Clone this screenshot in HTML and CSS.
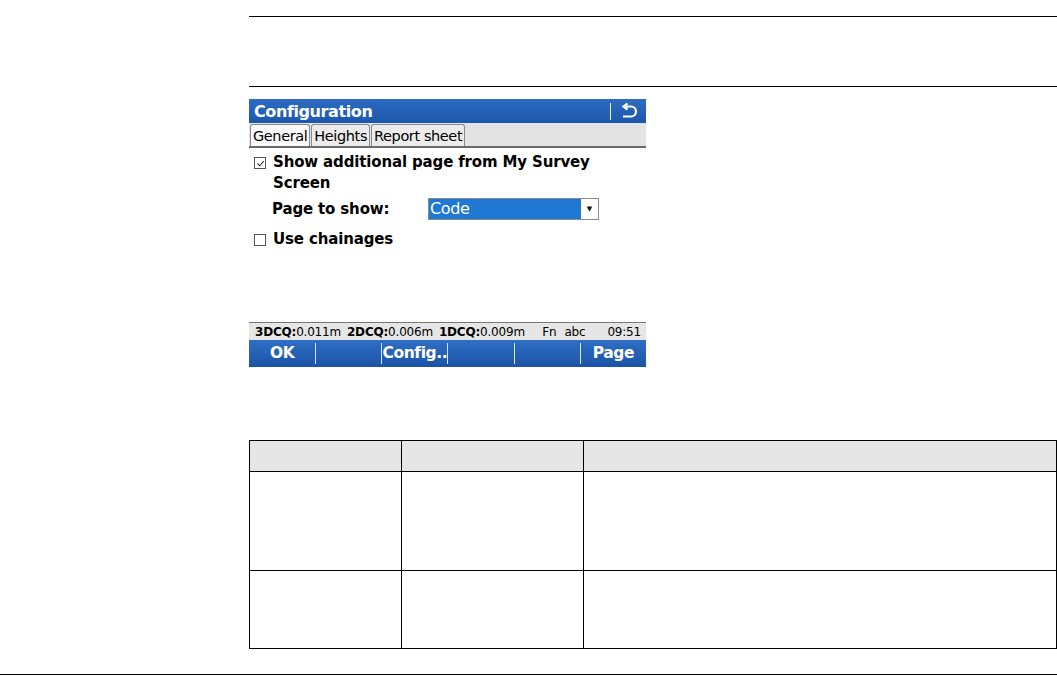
FILE: index.html
```html
<!DOCTYPE html>
<html>
<head>
    <title>Configuration</title>
    <link rel="stylesheet" href="styles.css">
</head>
<body>
    <div class="page">
        <div class="rule rule-top"></div>
        <div class="rule rule-mid"></div>

        <div class="screen">
            <div class="titlebar">
                <span class="title">Configuration</span>
                <span class="titlebar-tools">
                    <span class="tool-sep"></span>
                    <svg class="back-icon" width="18" height="16" viewBox="0 0 18 16">
                        <path d="M4 3.5 H11 A5 5 0 0 1 11 13.5 H3" fill="none" stroke="#fff" stroke-width="2.2"/>
                        <path d="M7.5 0.5 L3.5 3.5 L7.5 6.5" fill="none" stroke="#fff" stroke-width="2.2"/>
                    </svg>
                </span>
            </div>
            <div class="tabs">
                <span class="tab tab-active">General</span>
                <span class="tab">Heights</span>
                <span class="tab">Report sheet</span>
            </div>

            <div class="screen-body">
                <div class="check-row">
                    <span class="box">
                        <svg width="9" height="9" viewBox="0 0 9 9">
                            <path d="M1.5 4.5 L3.8 6.8 L7.8 2.2" fill="none" stroke="#333" stroke-width="1.1"/>
                        </svg>
                    </span>
                    <span class="check-label">Show additional page from My Survey<br>Screen</span>
                </div>
                <div class="field-row">
                    <span class="field-label">Page to show:</span>
                    <div class="select">
                        <span class="select-value">Code</span>
                        <span class="select-arrow">&#9660;</span>
                    </div>
                </div>
                <div class="check-row check-row-last">
                    <span class="box"></span>
                    <span class="check-label">Use chainages</span>
                </div>
            </div>

            <div class="statusbar">
                <span class="q"><b>3DCQ:</b>0.011m</span>
                <span class="q"><b>2DCQ:</b>0.006m</span>
                <span class="q"><b>1DCQ:</b>0.009m</span>
                <span class="status-spacer"></span>
                <span class="fn">Fn</span>
                <span class="abc">abc</span>
                <span class="clock">09:51</span>
            </div>
            <div class="softkeys">
                <span class="key">OK</span>
                <span class="key"></span>
                <span class="key">Config..</span>
                <span class="key"></span>
                <span class="key"></span>
                <span class="key">Page</span>
            </div>
        </div>

        <table class="info">
            <tr class="head-row"><th></th><th></th><th></th></tr>
            <tr class="row-one"><td></td><td></td><td></td></tr>
            <tr class="row-two"><td></td><td></td><td></td></tr>
        </table>
    </div>
    <div class="rule rule-bottom"></div>
</body>
</html>
```

FILE: styles.css
```css
body {
    margin: 0;
    background: #fff;
    font-family: "DejaVu Sans", Verdana, sans-serif;
    color: #000;
}
.page {
    padding-left: 249px;
}
.rule {
    border-top: 1px solid #000;
}
.rule-top {
    margin-top: 16px;
}
.rule-mid {
    margin-top: 69px;
}
.rule-bottom {
    margin-top: 25px;
}

/* device screen */
.screen {
    width: 397px;
    margin-top: 12px;
    background: #fff;
}
.titlebar {
    height: 24px;
    background: linear-gradient(#2c6cc2, #1d57aa);
    display: flex;
    align-items: center;
    justify-content: space-between;
    padding: 0 8px 0 5px;
}
.title {
    color: #fff;
    font-weight: bold;
    font-size: 16px;
    letter-spacing: -0.4px;
}
.titlebar-tools {
    display: flex;
    align-items: center;
    gap: 9px;
}
.tool-sep {
    width: 1px;
    height: 17px;
    background: #e8eef8;
}
.tabs {
    height: 23px;
    background: #e3e3e3;
    border-bottom: 2px solid #6a6a6a;
    display: flex;
    align-items: flex-end;
    padding-left: 1px;
}
.tab {
    height: 21px;
    line-height: 22px;
    padding: 0 2px;
    font-size: 14.5px;
    letter-spacing: -0.4px;
    border: 1px solid #8a8a8a;
    border-bottom: none;
    border-radius: 3px 3px 0 0;
    background: #ececec;
    margin-right: 1px;
}
.tab-active {
    background: #fafafa;
}
.screen-body {
    height: 174px;
    padding-top: 4px;
    box-sizing: border-box;
}
.check-row {
    display: flex;
    align-items: flex-start;
    padding-left: 5px;
}
.check-row-last {
    margin-top: 9px;
}
.box {
    width: 10px;
    height: 10px;
    border: 1px solid #555;
    margin-top: 5px;
    margin-right: 7px;
    display: flex;
    align-items: center;
    justify-content: center;
    background: #fff;
}
.check-label,
.field-label {
    font-weight: bold;
    font-size: 15px;
    line-height: 21px;
    letter-spacing: -0.15px;
}
.field-row {
    display: flex;
    align-items: center;
    padding-left: 23px;
    margin-top: 4px;
}
.field-label {
    width: 156px;
}
.select {
    width: 171px;
    height: 22px;
    border: 1px solid #8a8a8a;
    display: flex;
    box-sizing: border-box;
}
.select-value {
    flex: 1;
    background: #1f78d4;
    color: #fff;
    font-size: 16px;
    line-height: 20px;
    padding-left: 1px;
    letter-spacing: -0.4px;
}
.select-arrow {
    width: 17px;
    font-size: 7px;
    line-height: 20px;
    text-align: center;
    color: #111;
}

/* bottom bars */
.statusbar {
    height: 17px;
    border-top: 1px solid #777;
    background: #e6e6e6;
    display: flex;
    align-items: center;
    font-size: 12px;
    padding: 0 5px 0 6px;
    letter-spacing: -0.2px;
}
.q {
    margin-right: 6px;
}
.status-spacer {
    flex: 1;
}
.fn {
    margin-right: 8px;
}
.abc {
    margin-right: 22px;
}
.softkeys {
    height: 27px;
    background: linear-gradient(#2f6fc5, #1b53a6);
    display: grid;
    grid-template-columns: repeat(6, 1fr);
    align-items: center;
}
.key {
    height: 21px;
    line-height: 21px;
    text-align: center;
    color: #fff;
    font-weight: bold;
    font-size: 15.5px;
    letter-spacing: -0.4px;
    border-left: 1px solid #dbe6f6;
}
.key:first-child {
    border-left: none;
}

/* table */
.info {
    margin-top: 73px;
    width: 808px;
    border-collapse: collapse;
}
.info th,
.info td {
    border: 1px solid #000;
    padding: 0;
}
.info th:nth-child(1) {
    width: 151px;
}
.info th:nth-child(2) {
    width: 181px;
}
.head-row {
    height: 31px;
    background: #e6e6e6;
}
.row-one {
    height: 99px;
}
.row-two {
    height: 78px;
}
```
